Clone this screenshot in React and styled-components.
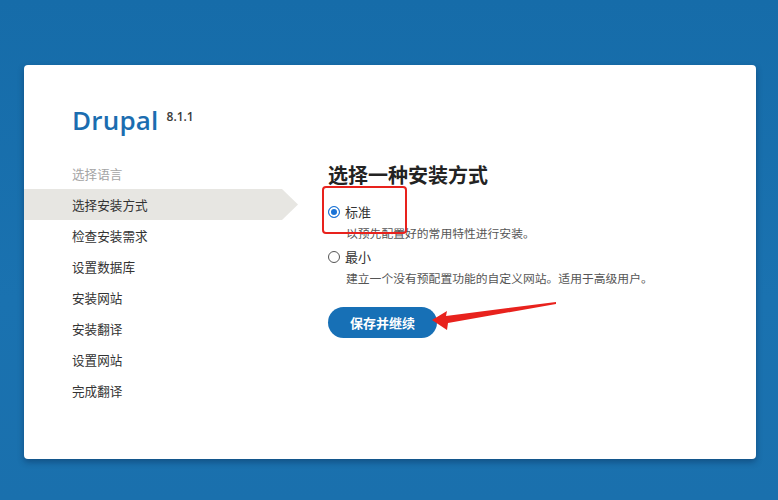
import React from 'react';
import styled, { createGlobalStyle } from 'styled-components';

const GlobalStyle = createGlobalStyle`
  html, body {
    margin: 0;
    padding: 0;
  }
  body {
    background: #1870ad;
    font-family: "Noto Sans CJK SC", "Noto Sans", sans-serif;
    -webkit-font-smoothing: antialiased;
  }
`;

const Page = styled.div`
  position: relative;
  width: 778px;
  height: 500px;
  box-sizing: border-box;
  padding: 65px 22px 0 24px;
  background: linear-gradient(180deg, #166ca9 0%, #1a72b0 60%, #1a70ad 100%);
  overflow: hidden;
`;

const Card = styled.div`
  width: 732px;
  height: 394px;
  background: #ffffff;
  border-radius: 4px;
  box-shadow: 0 3px 6px rgba(8, 40, 80, 0.45);
  display: flex;
  flex-direction: column;
`;

const Header = styled.div`
  height: 93px;
  box-sizing: border-box;
  padding: 37px 0 0 48px;
  display: flex;
  align-items: flex-start;
`;

const Logo = styled.div`
  font-family: "Open Sans", "Liberation Sans", sans-serif;
  font-weight: 600;
  font-size: 26px;
  line-height: 36px;
  color: #1b6db0;
  letter-spacing: 0.2px;
`;

const Version = styled.span`
  font-family: "Open Sans", "Liberation Sans", sans-serif;
  font-weight: 600;
  font-size: 12px;
  line-height: 14px;
  color: #3a3a3a;
  margin: 8px 0 0 8px;
`;

const Body = styled.div`
  display: flex;
  gap: 30px;
`;

const Steps = styled.ul`
  list-style: none;
  margin: 0;
  padding: 0;
  width: 274px;
  flex-shrink: 0;
`;

const Step = styled.li`
  height: 31px;
  box-sizing: border-box;
  padding-left: 48px;
  display: flex;
  align-items: center;
  font-size: 12.6px;
  color: ${p => (p.$done ? '#a4a4a4' : '#333333')};
  background: ${p => (p.$active ? '#e7e6e2' : 'transparent')};
  clip-path: ${p =>
    p.$active ? 'polygon(0 0, 258px 0, 100% 50%, 258px 100%, 0 100%)' : 'none'};
`;

const Main = styled.div`
  display: flex;
  flex-direction: column;
  padding-top: 3px;
`;

const Title = styled.h2`
  margin: 0 0 13px;
  font-size: 20px;
  line-height: 28px;
  font-weight: 700;
  color: #232323;
`;

const Option = styled.label`
  display: flex;
  flex-direction: column;
  margin-bottom: 3px;
`;

const OptionHead = styled.span`
  display: flex;
  align-items: center;
  gap: 5px;
  font-size: 13px;
  line-height: 20px;
  color: #333;
`;

const Radio = styled.span`
  width: 12px;
  height: 12px;
  box-sizing: border-box;
  border-radius: 50%;
  border: 1px solid ${p => (p.$checked ? '#1a73d6' : '#555')};
  background: ${p => (p.$checked ? '#1a73d6' : '#fff')};
  box-shadow: ${p => (p.$checked ? 'inset 0 0 0 2px #fff' : 'none')};
`;

const OptionDesc = styled.span`
  padding-left: 18px;
  font-size: 11.8px;
  line-height: 22px;
  color: #555;
`;

const SaveButton = styled.button`
  margin-top: 15px;
  width: 109px;
  height: 31px;
  border: none;
  border-radius: 16px;
  background: #1770b6;
  color: #fff;
  font-family: "Noto Sans CJK SC", sans-serif;
  font-weight: 700;
  font-size: 13px;
  cursor: pointer;
`;

const Annotations = styled.svg`
  position: absolute;
  left: 0;
  top: 0;
  pointer-events: none;
`;

const steps = [
  { label: '选择语言', done: true },
  { label: '选择安装方式', active: true },
  { label: '检查安装需求' },
  { label: '设置数据库' },
  { label: '安装网站' },
  { label: '安装翻译' },
  { label: '设置网站' },
  { label: '完成翻译' },
];

const options = [
  { label: '标准', desc: '以预先配置好的常用特性进行安装。', checked: true },
  { label: '最小', desc: '建立一个没有预配置功能的自定义网站。适用于高级用户。' },
];

export default function App() {
  return (
    <>
      <GlobalStyle />
      <Page>
        <Card>
          <Header>
            <Logo>Drupal</Logo>
            <Version>8.1.1</Version>
          </Header>
          <Body>
            <Steps>
              {steps.map(s => (
                <Step key={s.label} $done={s.done} $active={s.active}>
                  {s.label}
                </Step>
              ))}
            </Steps>
            <Main>
              <Title>选择一种安装方式</Title>
              {options.map(o => (
                <Option key={o.label}>
                  <OptionHead>
                    <Radio $checked={o.checked} />
                    {o.label}
                  </OptionHead>
                  <OptionDesc>{o.desc}</OptionDesc>
                </Option>
              ))}
              <SaveButton>保存并继续</SaveButton>
            </Main>
          </Body>
        </Card>
        <Annotations width="778" height="500" viewBox="0 0 778 500">
          <rect x="323" y="187" width="83" height="46" rx="3" fill="none" stroke="#e8221d" strokeWidth="2" />
          <polygon
            points="432,320 447,311 446,316 556,302 556,304 448,323 447,330"
            fill="#e8221d"
          />
        </Annotations>
      </Page>
    </>
  );
}
